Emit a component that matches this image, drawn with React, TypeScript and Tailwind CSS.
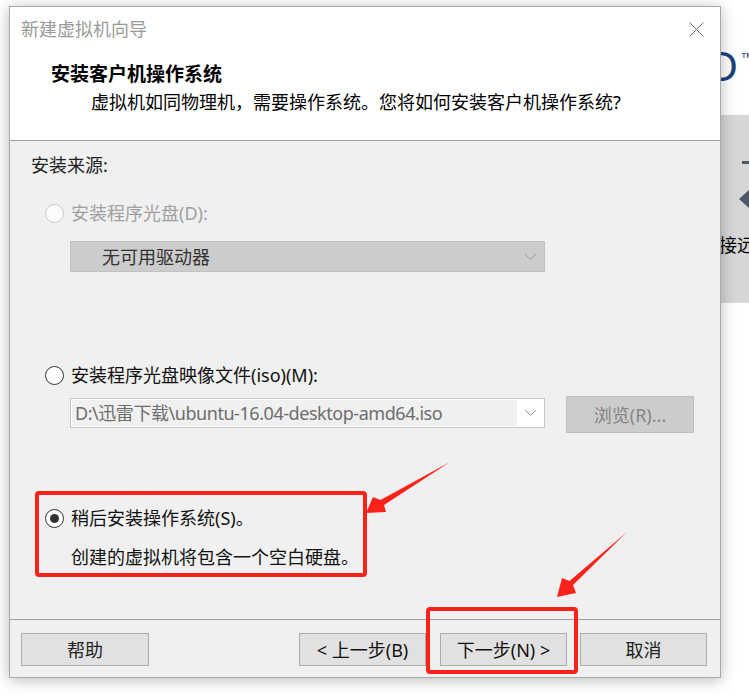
import React from "react";

function Radio({ state }: { state: "disabled" | "off" | "on" }) {
  const cls =
    state === "disabled"
      ? "border-[#c9c9c9] bg-[#fbfbfb]"
      : "border-[#333333] bg-white";
  return (
    <span
      className={`flex h-[19px] w-[19px] shrink-0 items-center justify-center rounded-full border-[1.5px] ${cls}`}
    >
      {state === "on" && <span className="h-[9px] w-[9px] rounded-full bg-[#333333]" />}
    </span>
  );
}

function Chevron() {
  return (
    <svg width="13" height="8" viewBox="0 0 13 8" className="shrink-0">
      <polyline points="1,1 6.5,6.5 12,1" fill="none" stroke="#9a9a9a" strokeWidth="1" />
    </svg>
  );
}

export default function App() {
  return (
    <div className="relative h-[697px] w-[749px] overflow-hidden bg-white font-['Noto_Sans','Noto_Sans_CJK_SC',sans-serif]">
      {/* background application */}
      <div className="absolute left-[705px] top-[46px] flex items-start text-[#1e3f7b]">
        <span className="font-['Liberation_Sans',sans-serif] text-[42px] leading-none">O</span>
        <span className="ml-[3px] mt-[5px] font-['Liberation_Sans',sans-serif] text-[13px] leading-none">™</span>
      </div>
      <div className="absolute left-[720px] top-[115px] h-[188px] w-[40px] bg-[#d6d6d6]">
        <svg width="40" height="60" viewBox="0 0 40 60" className="absolute left-0 top-[40px]">
          <rect x="22" y="6" width="18" height="3" fill="#4b5a68" />
          <polygon points="19,44 29,35 40,35 40,53 29,53" fill="#4b5a68" />
        </svg>
      </div>
      <div className="absolute left-[701px] top-[233px] whitespace-nowrap text-[18px] leading-[24px] text-black">
        连接远程服务器
      </div>

      {/* dialog */}
      <div className="absolute left-[9px] top-[6px] flex h-[672px] w-[712px] flex-col border border-[#a9a9a9] bg-[#f0f0f0] shadow-[0_2px_14px_rgba(0,0,0,0.28)]">
        {/* header */}
        <div className="flex h-[134px] flex-col border-b border-[#a0a0a0] bg-white">
          <div className="flex h-[44px] items-center justify-between pl-[11px] pr-[16px]">
            <span className="text-[18px] leading-[24px] text-[#9a9a9a]">新建虚拟机向导</span>
            <svg width="15" height="15" viewBox="0 0 15 15">
              <line x1="0.5" y1="0.5" x2="14.5" y2="14.5" stroke="#707070" strokeWidth="1" />
              <line x1="14.5" y1="0.5" x2="0.5" y2="14.5" stroke="#707070" strokeWidth="1" />
            </svg>
          </div>
          <div className="mt-[11px] pl-[41px] text-[19px] font-bold leading-[24px] text-black">
            安装客户机操作系统
          </div>
          <div className="mt-[4px] pl-[81px] text-[18px] leading-[24px] text-black">
            虚拟机如同物理机，需要操作系统。您将如何安装客户机操作系统?
          </div>
        </div>

        {/* body */}
        <div className="flex h-[479px] flex-col border-b border-[#a0a0a0]">
          <div className="mt-[12px] pl-[21px] text-[18px] leading-[24px] text-[#222222]">安装来源:</div>

          <div className="mt-[24px] flex items-center gap-[7px] pl-[35px]">
            <Radio state="disabled" />
            <span className="text-[18px] leading-[24px] text-[#a0a0a0]">安装程序光盘(D):</span>
          </div>
          <div className="ml-[60px] mt-[16px] flex h-[31px] w-[475px] items-center justify-between border border-[#c2c2c2] bg-[#cccccc] pl-[31px] pr-[7px]">
            <span className="text-[18px] leading-[24px] text-[#333333]">无可用驱动器</span>
            <Chevron />
          </div>

          <div className="mt-[91px] flex items-center gap-[7px] pl-[35px]">
            <Radio state="off" />
            <span className="text-[18px] leading-[24px] text-[#111111]">安装程序光盘映像文件(iso)(M):</span>
          </div>
          <div className="ml-[60px] mt-[9px] flex items-start">
            <div className="mt-[2px] flex h-[30px] w-[475px] items-center border border-[#c6c6c6] bg-white pl-[1px] pr-[7px]">
              <div className="flex h-[26px] w-[445px] items-center bg-[#f0f0f0] pl-[3px]">
                <span className="whitespace-nowrap text-[18px] leading-[24px] tracking-[-0.45px] text-[#6d6d6d]">
                  D:\迅雷下载\ubuntu-16.04-desktop-amd64.iso
                </span>
              </div>
              <div className="ml-auto">
                <Chevron />
              </div>
            </div>
            <div className="ml-[21px] flex h-[37px] w-[128px] items-center justify-center border border-[#bfbfbf] bg-[#cccccc] text-[18px] leading-[24px] text-[#858585]">
              浏览(R)...
            </div>
          </div>

          <div className="mt-[73px] flex items-center gap-[7px] pl-[35px]">
            <Radio state="on" />
            <span className="text-[18px] leading-[24px] text-[#111111]">稍后安装操作系统(S)。</span>
          </div>
          <div className="mt-[15px] pl-[61px] text-[18px] leading-[24px] text-[#111111]">
            创建的虚拟机将包含一个空白硬盘。
          </div>
        </div>

        {/* footer */}
        <div className="flex flex-1 items-start pl-[11px] pr-[13px] pt-[13px]">
          <div className="flex h-[33px] w-[128px] items-center justify-center border border-[#adadad] bg-[#e1e1e1] text-[18px] leading-[24px] text-[#222222]">
            帮助
          </div>
          <div className="ml-auto flex">
            <div className="flex h-[33px] w-[127px] items-center justify-center border border-[#adadad] bg-[#e1e1e1] text-[18px] leading-[24px] text-[#111111]">
              &lt; 上一步(B)
            </div>
            <div className="ml-[14px] flex h-[33px] w-[127px] items-center justify-center border border-[#adadad] bg-[#e1e1e1] text-[18px] leading-[24px] text-[#111111]">
              下一步(N) &gt;
            </div>
            <div className="ml-[13px] flex h-[33px] w-[127px] items-center justify-center border border-[#adadad] bg-[#e1e1e1] text-[18px] leading-[24px] text-[#222222]">
              取消
            </div>
          </div>
        </div>
      </div>

      {/* annotations */}
      <div className="absolute left-[35px] top-[491px] h-[86px] w-[332px] rounded-[4px] border-4 border-[#fa2219]" />
      <div className="absolute left-[426px] top-[607px] h-[67px] w-[152px] rounded-[4px] border-4 border-[#fa2219]" />
      <svg className="pointer-events-none absolute left-0 top-0" width="749" height="697" viewBox="0 0 749 697">
        <polygon points="450,462 380.5,500 373,497 366,513 386,512 384,505" fill="#fa2219" />
        <polygon points="627,532 569.5,581 562,578 557,597 576,593 573,585" fill="#fa2219" />
      </svg>
    </div>
  );
}
